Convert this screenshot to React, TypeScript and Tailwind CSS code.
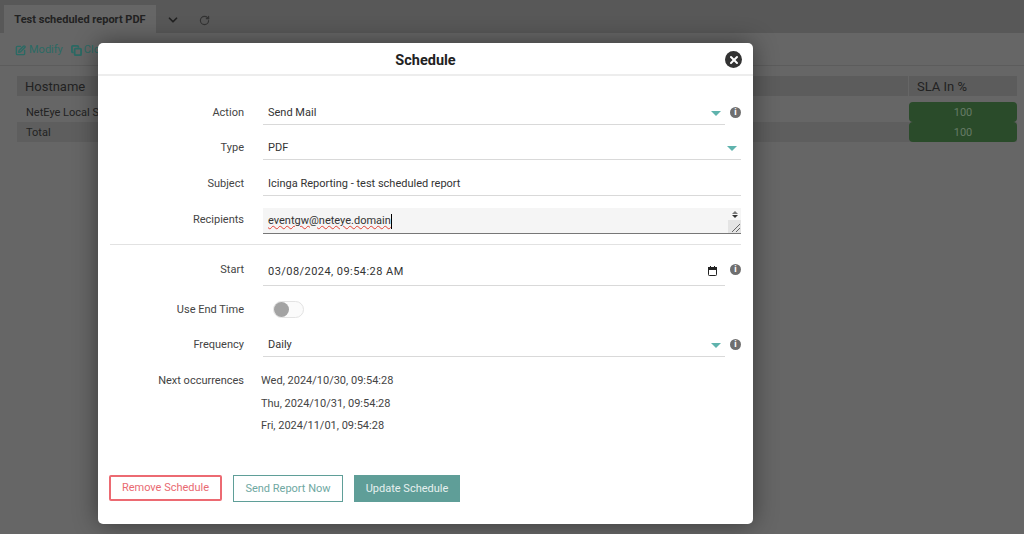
import { X, ChevronDown, RotateCw, SquarePen, Copy } from "lucide-react";

function Caret() {
  return <span className="mr-[4px] block h-0 w-0 border-x-[5px] border-t-[5px] border-x-transparent border-t-[#5fb3ad]" />;
}

function InfoDot() {
  return (
    <span className="flex h-[11px] w-[11px] items-center justify-center rounded-full bg-[#6f6f6f] text-[9px] font-bold leading-none text-white">
      i
    </span>
  );
}

function Row({ label, wide, info, h, inputH = "h-[25px]", children }: { label: string; wide?: boolean; info?: boolean; h: string; inputH?: string; children: React.ReactNode }) {
  return (
    <div className={`flex ${h}`}>
      <div className="w-[134px] shrink-0 text-right text-[11px] leading-[26px] text-[#444]">{label}</div>
      <div className={`ml-[19px] flex items-center justify-between border-b border-[#d9d9d9] pl-[5px] pt-[2px] text-[11px] text-[#333] ${inputH} ${wide ? "w-[478px]" : "w-[463px]"}`}>
        {children}
      </div>
      {info && (
        <div className="ml-[5px] flex h-[25px] items-center pb-[1px]">
          <InfoDot />
        </div>
      )}
    </div>
  );
}

export default function App() {
  return (
    <div className="relative h-[534px] w-[1024px] overflow-hidden bg-[#666666] font-['Roboto',sans-serif]">
      <div className="flex h-[33px] items-end bg-[#585858] pl-[4px]">
        <div className="flex h-[28px] w-[152px] items-center justify-center bg-[#666666] pt-[3px] text-[11px] font-bold text-[#222]">
          Test scheduled report PDF
        </div>
        <ChevronDown className="ml-[10px] mb-[6px] h-[14px] w-[14px] text-[#222]" strokeWidth={3} />
        <RotateCw className="ml-[19px] mb-[7px] h-[11px] w-[11px] text-[#333]" strokeWidth={2.5} />
      </div>
      <div className="flex h-[33px] items-center gap-[8px] border-b border-[#5c5c5c] pl-[15px] pt-[2px] text-[11px] text-[#2b6a64]">
        <span className="flex items-center gap-[3px]">
          <SquarePen className="h-[11px] w-[11px]" strokeWidth={3} />
          Modify
        </span>
        <span className="flex items-center gap-[2px]">
          <Copy className="h-[11px] w-[11px]" strokeWidth={4} />
          Clone
        </span>
      </div>
      <div className="pl-[17px] pr-[7px] pt-[10px]">
        <div className="flex h-[20px] gap-[1px] text-[13px] leading-[22px] text-[#222]">
          <div className="flex-1 bg-[#5c5c5c] pl-[8px]">Hostname</div>
          <div className="w-[108px] bg-[#5c5c5c] pl-[8px]">SLA In %</div>
        </div>
        <div className="mt-[6px] flex h-[20px] justify-between text-[11px] leading-[22px] text-[#222]">
          <div className="pl-[9px]">NetEye Local Server</div>
          <div className="w-[108px] rounded-[4px] bg-[#2a4b2a] text-center text-[11px] text-[#667a66]">100</div>
        </div>
        <div className="flex h-[20px] justify-between bg-[#5e5e5e] text-[11px] leading-[22px] text-[#222]">
          <div className="pl-[9px]">Total</div>
          <div className="w-[108px] rounded-[4px] bg-[#2a4b2a] text-center text-[11px] text-[#667a66]">100</div>
        </div>
      </div>

      <div className="absolute left-[98px] top-[43px] h-[481px] w-[655px] rounded-[5px] bg-white shadow-[0_0_24px_rgba(0,0,0,0.45)]">
        <div className="relative flex h-[33px] items-center justify-center border-b-2 border-[#ededed] pt-[5px] text-[14.5px] font-bold text-[#222]">
          Schedule
          <span className="absolute right-[11px] top-[8px] flex h-[17px] w-[17px] items-center justify-center rounded-full bg-[#333]">
            <X className="h-[12px] w-[12px] text-white" strokeWidth={4} />
          </span>
        </div>

        <div className="px-[12px] pt-[24px]">
          <Row label="Action" info h="h-[35px]">
            <span>Send Mail</span>
            <Caret />
          </Row>
          <Row label="Type" wide h="h-[36px]">
            <span>PDF</span>
            <Caret />
          </Row>
          <Row label="Subject" wide h="h-[37px]">
            <span>Icinga Reporting - test scheduled report</span>
          </Row>
          <div className="flex h-[25px]">
            <div className="w-[134px] shrink-0 text-right text-[11px] leading-[24px] text-[#444]">Recipients</div>
            <div className="relative ml-[19px] flex h-[26px] w-[478px] items-center border-b border-[#777] bg-[#f5f5f5] pl-[5px] pt-[2px] text-[11px] text-[#333]">
              <span className="underline decoration-wavy decoration-[#e34234] decoration-1">eventgw@neteye.domain</span>
              <span className="h-[15px] w-px bg-black" />
              <div className="absolute right-0 top-0 flex h-full w-[13px] flex-col items-center">
                <div className="mt-[3px] h-0 w-0 border-x-[3px] border-b-[3px] border-x-transparent border-b-[#777]" />
                <div className="mt-[1px] h-0 w-0 border-x-[3px] border-t-[3px] border-x-transparent border-t-[#333]" />
                <div className="mt-auto flex h-[13px] w-full items-end justify-end bg-[#e4e4e4]">
                  <svg width="11" height="11" viewBox="0 0 11 11" fill="none" stroke="#666" strokeWidth="1">
                    <path d="M2 10 L10 2" />
                    <path d="M6 10 L10 6" />
                  </svg>
                </div>
              </div>
            </div>
          </div>
          <div className="mb-[12px] mt-[11px] h-px bg-[#e2e2e2]" />
          <Row label="Start" info h="h-[36px]" inputH="h-[29px]">
            <span className="tracking-[0.45px]">03/08/2024, 09:54:28 AM</span>
            <svg className="mr-[8px] -mt-[2px]" width="9" height="10" viewBox="0 0 9 10">
              <rect x="0.5" y="1.5" width="8" height="8" rx="0.8" fill="none" stroke="#222" />
              <rect x="0" y="1" width="9" height="3" fill="#222" />
              <rect x="2" y="0" width="1" height="2" fill="#222" />
              <rect x="6" y="0" width="1" height="2" fill="#222" />
            </svg>
          </Row>
          <div className="mb-[6px] flex h-[33px] items-center">
            <div className="w-[134px] shrink-0 pt-[2px] text-right text-[11px] text-[#444]">Use End Time</div>
            <div className="ml-[29px] flex h-[17px] w-[31px] items-center rounded-full border border-[#e3e3e3] bg-[#fbfbfb]">
              <span className="h-[15px] w-[15px] rounded-full bg-[#a3a3a3]" />
            </div>
          </div>
          <Row label="Frequency" info h="h-[37px]">
            <span>Daily</span>
            <Caret />
          </Row>
          <div className="flex pt-[1px]">
            <div className="w-[134px] shrink-0 text-right text-[11px] leading-[22.5px] text-[#444]">Next occurrences</div>
            <div className="ml-[17px] text-[11px] leading-[22.5px] text-[#444]">
              <div>Wed, 2024/10/30, 09:54:28</div>
              <div>Thu, 2024/10/31, 09:54:28</div>
              <div>Fri, 2024/11/01, 09:54:28</div>
            </div>
          </div>
          <div className="-ml-[1px] mt-[37px] flex items-start text-[11px]">
            <button className="h-[26px] w-[113px] rounded-[2px] border-2 border-[#ec6a72] pt-[2px] text-[#e96a72]">Remove Schedule</button>
            <button className="ml-[11px] h-[27px] w-[110px] border border-[#5f9e98] pt-[2px] text-[#6fa8a2]">Send Report Now</button>
            <button className="ml-[11px] h-[27px] w-[106px] bg-[#5f9e98] pt-[2px] text-[#e6f0ef]">Update Schedule</button>
          </div>
        </div>
      </div>
    </div>
  );
}
